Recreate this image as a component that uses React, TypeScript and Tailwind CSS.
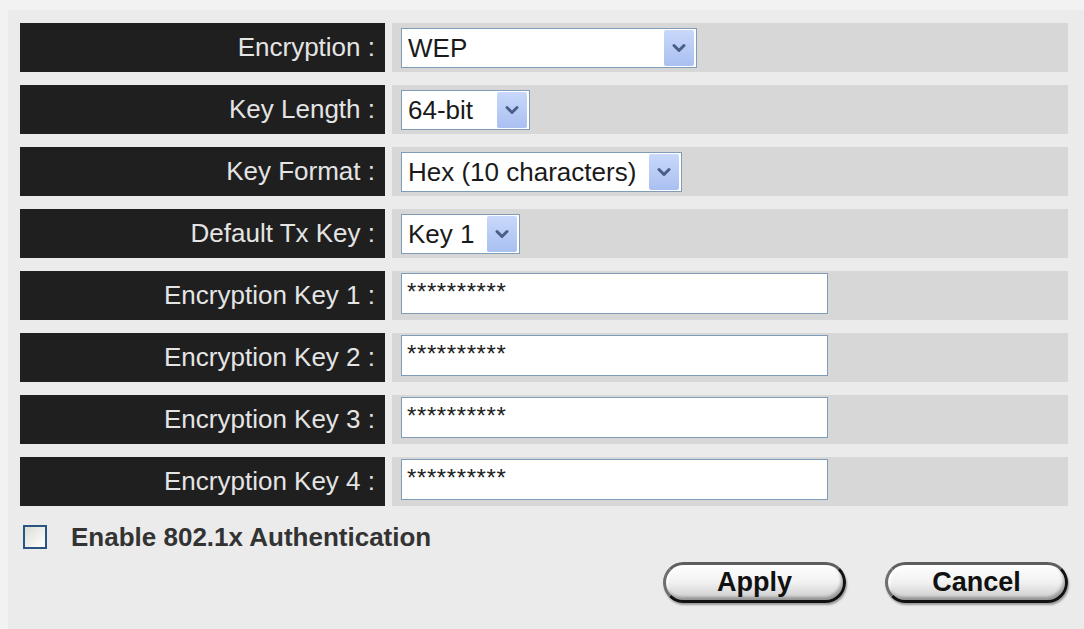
import React from 'react'

const FONT = "font-['Liberation_Sans',Arial,sans-serif]"

function Chevron() {
  return (
    <svg width="14" height="10" viewBox="0 0 14 10" className="block">
      <polyline points="2,2.5 7,7.5 12,2.5" fill="none" stroke="#4a5f86" strokeWidth="3" strokeLinecap="round" strokeLinejoin="round" />
    </svg>
  )
}

function Select({ value, width }: { value: string; width: string }) {
  return (
    <div className={`flex h-[40px] items-center border border-[#7f9db9] bg-white ${width}`}>
      <span className="flex-1 overflow-hidden whitespace-nowrap pl-[6px] text-[26px] leading-[36px] text-[#1a1a1a]">{value}</span>
      <span className="mr-[2px] flex h-[36px] w-[30px] shrink-0 items-center justify-center rounded-[2px] bg-gradient-to-b from-[#c9d8fb] to-[#a9c0f1]">
        <Chevron />
      </span>
    </div>
  )
}

function KeyInput() {
  return (
    <input
      readOnly
      value="**********"
      className={`mt-[2px] h-[41px] w-[427px] self-start border border-[#7f9db9] bg-white px-[5px] pb-[4px] text-[24px] tracking-[0.6px] text-[#222] outline-none ${FONT}`}
    />
  )
}

function Row({ label, children }: { label: string; children: React.ReactNode }) {
  return (
    <div className="flex h-[49px] gap-[7px]">
      <div className="flex w-[365px] items-center justify-end bg-[#1f1f1f] pr-[10px] text-[26px] text-[#e4e4e4]">
        {label}
      </div>
      <div className="flex flex-1 items-center bg-[#d7d7d7] pl-[9px]">{children}</div>
    </div>
  )
}

function PillButton({ label }: { label: string }) {
  return (
    <button
      className="h-[41px] w-[183px] rounded-full border-[3px] border-t-[#5e5e5e] border-l-[#6e6e6e] border-b-[#111] border-r-[#111] bg-gradient-to-b from-[#ffffff] via-[#f1f1f1] to-[#cbcbcb] text-[27px] font-bold leading-none text-[#111] shadow-[inset_-2px_-3px_3px_rgba(0,0,0,0.28),inset_2px_2px_2px_rgba(255,255,255,0.9),1px_2px_2px_rgba(0,0,0,0.35)]"
    >
      {label}
    </button>
  )
}

export default function App() {
  return (
    <div className={`h-[629px] w-[1084px] bg-[#f2f2f2] pl-[8px] pt-[10px] ${FONT}`}>
      <div className="h-full bg-[#ebebeb] pl-[12px] pr-[16px] pt-[13px]">
        <div className="flex flex-col gap-[13px]">
          <Row label="Encryption :">
            <Select value="WEP" width="w-[296px]" />
          </Row>
          <Row label="Key Length :">
            <Select value="64-bit" width="w-[129px]" />
          </Row>
          <Row label="Key Format :">
            <Select value="Hex (10 characters)" width="w-[281px]" />
          </Row>
          <Row label="Default Tx Key :">
            <Select value="Key 1" width="w-[119px]" />
          </Row>
          {[1, 2, 3, 4].map((n) => (
            <Row key={n} label={`Encryption Key ${n} :`}>
              <KeyInput />
            </Row>
          ))}
        </div>

        <label className="mt-[18px] flex h-[25px] items-center">
          <span className="ml-[3px] h-[24px] w-[24px] shrink-0 border-2 border-[#2a5583] bg-gradient-to-br from-[#dcdcd6] to-[#ffffff]" />
          <span className="ml-[24px] text-[26px] font-bold leading-none text-[#333]">Enable 802.1x Authentication</span>
        </label>

        <div className="mt-[13px] flex justify-end gap-[39px]">
          <PillButton label="Apply" />
          <PillButton label="Cancel" />
        </div>
      </div>
    </div>
  )
}
